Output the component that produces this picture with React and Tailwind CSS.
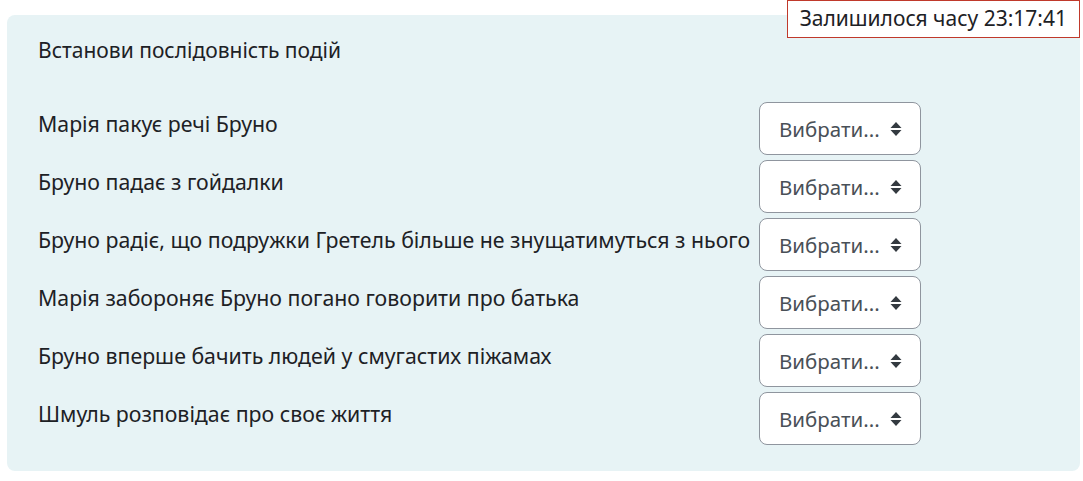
import React from 'react';

const items = [
  'Марія пакує речі Бруно',
  'Бруно падає з гойдалки',
  'Бруно радіє, що подружки Гретель більше не знущатимуться з нього',
  'Марія забороняє Бруно погано говорити про батька',
  'Бруно вперше бачить людей у смугастих піжамах',
  'Шмуль розповідає про своє життя',
];

function SelectBox() {
  return (
    <div className="flex h-[53px] w-[162px] items-center justify-between rounded-lg border border-[#8f959e] bg-white pl-[19px] pr-[18px] text-[20.5px] text-[#495057]">
      <span>Вибрати...</span>
      <svg width="12" height="16" viewBox="0 0 12 16" className="text-[#343a40]">
        <path d="M6 1 L11.5 7 H0.5 Z" fill="currentColor" />
        <path d="M6 15 L11.5 9 H0.5 Z" fill="currentColor" />
      </svg>
    </div>
  );
}

export default function App() {
  return (
    <div className="relative min-h-[481px] bg-white pt-[15px] text-[21px] leading-[30px] text-[#1d2125]" style={{ fontFamily: '"Noto Sans", "Open Sans", sans-serif' }}>
      <div className="absolute right-[3px] top-0 border border-[#c0392b] bg-white px-[12px] pb-[4px] pt-[2px] leading-[30px]">
        Залишилося часу 23:17:41
      </div>

      <div className="ml-[7px] mr-[3px] rounded-lg bg-[#e7f3f5] pl-[31px] pb-[26px] pt-[20px]">
        <div>Встанови послідовність подій</div>
        <div className="mt-[37px] flex flex-col gap-[5px]">
          {items.map((t) => (
            <div key={t} className="grid grid-cols-[721px_162px]">
              <div className="pt-[7px] whitespace-nowrap text-[21.3px]">{t}</div>
              <SelectBox />
            </div>
          ))}
        </div>
      </div>
    </div>
  );
}
